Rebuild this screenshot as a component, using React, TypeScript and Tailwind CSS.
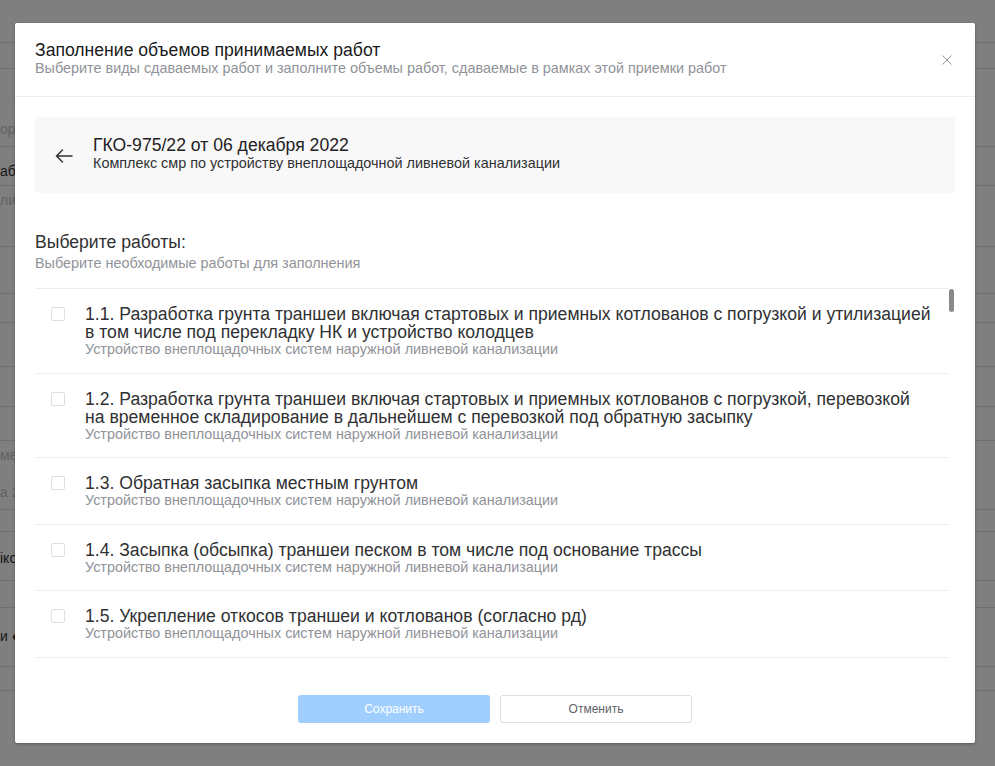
import React from "react";

const items = [
  {
    title:
      "1.1. Разработка грунта траншеи включая стартовых и приемных котлованов с погрузкой и утилизацией в том числе под перекладку НК и устройство колодцев",
  },
  {
    title:
      "1.2. Разработка грунта траншеи включая стартовых и приемных котлованов с погрузкой, перевозкой на временное складирование в дальнейшем с перевозкой под обратную засыпку",
  },
  { title: "1.3. Обратная засыпка местным грунтом" },
  { title: "1.4. Засыпка (обсыпка) траншеи песком в том числе под основание трассы" },
  { title: "1.5. Укрепление откосов траншеи и котлованов (согласно рд)" },
];

const SUB = "Устройство внеплощадочных систем наружной ливневой канализации";

function BackgroundPage() {
  const rows: { h: string; text?: string; tone?: string }[] = [
    { h: "h-[43px]" },
    { h: "h-[26px]" },
    { h: "h-[78px]", text: "ор", tone: "text-[#c0c4cc] pt-[52px]" },
    { h: "h-[39px]", text: "аб", tone: "text-[#303133] pt-[16px]" },
    { h: "h-[61px]", text: "лис", tone: "text-[#c0c4cc] pt-[6px]" },
    { h: "h-[47px]" },
    { h: "h-[29px]" },
    { h: "h-[44px]" },
    { h: "h-[40px]" },
    { h: "h-[34px]" },
    { h: "h-[69px]", text: "ме", tone: "text-[#c0c4cc] pt-[6px]" },
    { h: "h-[22px]" },
    { h: "h-[49px]", text: "іко", tone: "text-[#303133] pt-[18px]" },
    { h: "h-[27px]" },
    { h: "h-[59px]", text: "и ●", tone: "text-[#303133] pt-[20px]" },
    { h: "h-[24px]" },
  ];
  return (
    <div className="w-full h-full bg-white flex flex-col">
      {rows.map((r, i) => (
        <div
          key={i}
          className={`${r.h} border-b border-[#dcdfe6] text-[14px] leading-[16px] ${r.tone ?? ""}`}
        >
          {r.text}
          {r.text === "ме" && <div className="mt-[21px]">а 2</div>}
        </div>
      ))}
    </div>
  );
}

function Checkbox() {
  return (
    <span className="mt-[2px] w-[14px] h-[14px] shrink-0 rounded-[2px] border border-[#dcdfe6] bg-white" />
  );
}

export default function App() {
  return (
    <div className="relative w-full h-[766px] overflow-hidden font-['Liberation_Sans',Arial,sans-serif]">
      <BackgroundPage />
      <div className="absolute inset-0 bg-black/50" />

      <div className="absolute left-[15px] top-[23px] w-[960px] h-[720px] bg-white rounded-[2px] shadow-[0_1px_3px_rgba(0,0,0,0.3)] flex flex-col">
        {/* Header */}
        <div className="relative px-[20px] pt-[17px] pb-[20px] border-b border-[#ebeef5]">
          <div className="text-[17.6px] leading-[20px] text-[#1a1a1a]">
            Заполнение объемов принимаемых работ
          </div>
          <div className="text-[14.4px] leading-[16px] text-[#909399]">
            Выберите виды сдаваемых работ и заполните объемы работ, сдаваемые в рамках этой приемки работ
          </div>
          <button className="absolute right-[23px] top-[32px] w-[10px] h-[10px] text-[#909399]">
            <svg width="10" height="10" viewBox="0 0 10 10" fill="none">
              <path d="M0.5 0.5L9.5 9.5M9.5 0.5L0.5 9.5" stroke="currentColor" strokeWidth="1" />
            </svg>
          </button>
        </div>

        {/* Body */}
        <div className="px-[20px] pt-[20px]">
          <div className="h-[76px] rounded-[4px] bg-[#f8f8f8] px-[20px] flex items-center gap-[20px]">
            <svg width="18" height="14" viewBox="0 0 18 14" fill="none" className="shrink-0 text-[#303133] mt-[2px]">
              <path d="M17 7H1.5M7.5 1L1.5 7L7.5 13" stroke="currentColor" strokeWidth="1.5" strokeLinecap="round" strokeLinejoin="round" />
            </svg>
            <div className="pb-[4px]">
              <div className="text-[17.6px] leading-[20px] text-[#1f2022]">ГКО-975/22 от 06 декабря 2022</div>
              <div className="text-[14.4px] leading-[16px] text-[#303133]">
                Комплекс смр по устройству внеплощадочной ливневой канализации
              </div>
            </div>
          </div>

          <div className="mt-[37px] text-[17.6px] leading-[24px] text-[#303133]">Выберите работы:</div>
          <div className="text-[14.4px] leading-[18px] text-[#909399]">Выберите необходимые работы для заполнения</div>

          <div className="relative mt-[16px] h-[384px] overflow-hidden">
            <div className="w-[914px] border-t border-[#ebeef5]">
              {items.map((it, i) => (
                <div key={i} className="flex gap-[20px] pl-[16px] pr-[16px] pt-[16px] pb-[15.5px] border-b border-[#ebeef5]">
                  <Checkbox />
                  <div>
                    <div className="text-[17.6px] leading-[18px] text-[#303133]">{it.title}</div>
                    <div className="text-[14.4px] leading-[16px] text-[#909399]">{SUB}</div>
                  </div>
                </div>
              ))}
            </div>
            <div className="absolute right-[1px] top-[1px] w-[5px] h-[23px] rounded-[3px] bg-[#8a8a8a]" />
          </div>
        </div>

        {/* Footer */}
        <div className="flex justify-center gap-[10px] pt-[23px]">
          <button className="w-[192px] h-[28px] rounded-[3px] bg-[#a0cfff] text-white text-[12px]">Сохранить</button>
          <button className="w-[192px] h-[28px] rounded-[3px] bg-white border border-[#dcdfe6] text-[#606266] text-[12px]">
            Отменить
          </button>
        </div>
      </div>
    </div>
  );
}
